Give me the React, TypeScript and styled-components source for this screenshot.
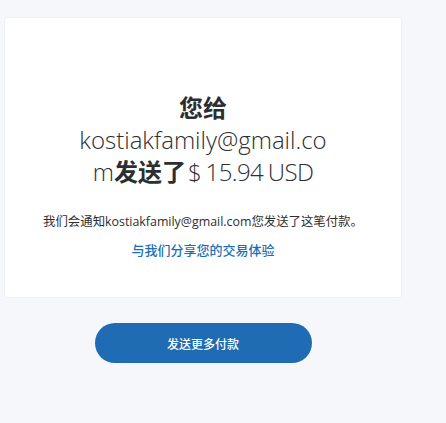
import React from "react";
import styled, { createGlobalStyle } from "styled-components";

const Global = createGlobalStyle`
  html, body { margin: 0; padding: 0; background: #f5f7fa; }
  body { font-family: "Open Sans", "Noto Sans CJK SC", sans-serif; color: #2c2e2f; }
`;

const Page = styled.div`
  width: 402px;
  height: 423px;
  padding: 17px 0 0 4px;
  box-sizing: border-box;
  display: flex;
  flex-direction: column;
  align-items: center;
`;

const Card = styled.section`
  width: 398px;
  height: 281px;
  flex-shrink: 0;
  box-sizing: border-box;
  background: #ffffff;
  border: 1px solid #eef0f3;
  border-radius: 3px;
  padding-top: 73px;
  display: flex;
  flex-direction: column;
  align-items: center;
`;

const Heading = styled.h1`
  margin: 0;
  font-family: "Open Sans", "Noto Sans CJK SC", sans-serif;
  font-weight: 300;
  font-size: 24px;
  line-height: 31.5px;
  text-align: center;
  color: #2c2e2f;
`;

const Line = styled.span`
  display: block;
`;

const Strong = styled.strong`
  font-family: "Noto Sans CJK SC", sans-serif;
  font-weight: 700;
`;

const Amount = styled.span`
  letter-spacing: -0.6px;
  word-spacing: -1px;
  margin-left: 2px;
`;

const Note = styled.p`
  margin: 25px 0 0;
  font-family: "Open Sans", "Noto Sans CJK SC", sans-serif;
  font-size: 12.4px;
  line-height: 18px;
  color: #2c2e2f;
  text-align: center;
`;

const Link = styled.a`
  margin-top: 10px;
  font-family: "Noto Sans CJK SC", sans-serif;
  font-size: 13px;
  font-weight: 500;
  line-height: 18px;
  color: #1a6fb6;
  text-decoration: none;
`;

const Button = styled.button`
  margin-top: 25px;
  width: 217px;
  height: 40px;
  flex-shrink: 0;
  border: none;
  border-radius: 20px;
  background: #1f6bb4;
  color: #ffffff;
  font-family: "Noto Sans CJK SC", sans-serif;
  font-size: 12px;
  font-weight: 500;
  cursor: pointer;
`;

export default function App() {
  return (
    <>
      <Global />
      <Page>
        <Card>
          <Heading>
            <Line><Strong>您给</Strong></Line>
            <Line>kostiakfamily@gmail.co</Line>
            <Line>m<Strong>发送了</Strong><Amount>$ 15.94 USD</Amount></Line>
          </Heading>
          <Note>我们会通知kostiakfamily@gmail.com您发送了这笔付款。</Note>
          <Link href="#">与我们分享您的交易体验</Link>
        </Card>
        <Button>发送更多付款</Button>
      </Page>
    </>
  );
}
